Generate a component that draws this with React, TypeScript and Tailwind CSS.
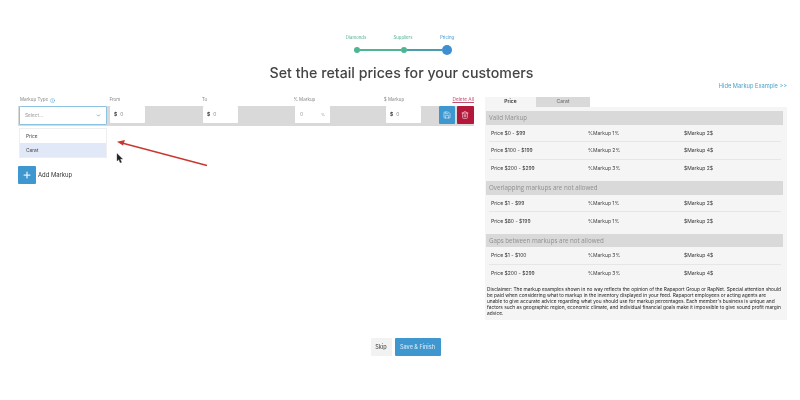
import React from "react";
import { Save, Trash2, Plus, ChevronDown, Info } from "lucide-react";

function Money({ className = "" }: { className?: string }) {
  return (
    <div className={`w-[35px] h-[17px] bg-white rounded-[1px] flex items-center px-[4px] text-[5px] ${className}`}>
      <span className="font-bold text-[#444]">$</span>
      <span className="ml-[3px] text-[#888]">0</span>
    </div>
  );
}

function Label({ children, className = "" }: { children: React.ReactNode; className?: string }) {
  return <div className={`text-[4.5px] leading-[6px] text-[#8a8a8a] ${className}`}>{children}</div>;
}

function Row({ a, b, c, last }: { a: string; b: string; c: string; last?: boolean }) {
  return (
    <div className={`mx-[3px] w-[292px] h-[17.5px] shrink-0 pt-[1px] flex items-center pl-[2px] text-[5px] text-[#333] ${last ? "" : "border-b border-[#e6e6e6]"}`}>
      <div className="w-[97px]">{a}</div>
      <div className="w-[96px] text-[#444]">{b}</div>
      <div>{c}</div>
    </div>
  );
}

function Head({ children }: { children: React.ReactNode }) {
  return (
    <div className="w-[297px] h-[13.5px] shrink-0 bg-[#d9d9d9] flex items-center pl-[3px] text-[6.2px] text-[#8f8f8f]" style={{ fontFamily: "'Open Sans', sans-serif" }}>
      {children}
    </div>
  );
}

export default function App() {
  return (
    <div className="relative w-[800px] h-[400px] bg-white overflow-hidden blur-[0.35px]" style={{ fontFamily: "Inter, 'Open Sans', sans-serif" }}>
      {/* Stepper */}
      <div className="pt-[35px] flex flex-col items-center">
        <div className="w-[131px] ml-[3px] flex text-[4.3px] leading-[5px]">
          <span className="w-[40px] text-center text-[#52b296]">Diamonds</span>
          <span className="ml-[7px] w-[40px] text-center text-[#52b296]">Suppliers</span>
          <span className="ml-[4px] w-[40px] text-center text-[#3f94cc]">Pricing</span>
        </div>
        <div className="mt-[5px] ml-[5px] w-[98px] h-[10px] flex items-center">
          <span className="w-[6px] h-[6px] rounded-full bg-[#4db592] shrink-0" />
          <span className="w-[41px] h-[1.5px] bg-[#4db592]" />
          <span className="w-[6px] h-[6px] rounded-full bg-[#4db592] shrink-0" />
          <span className="w-[35px] h-[1.5px] bg-[#4a9dab]" />
          <span className="w-[10px] h-[10px] rounded-full bg-[#3d8fd1] shrink-0" />
        </div>
        <h1 className="mt-[9px] ml-[3px] text-[14.2px] leading-[18px] font-medium text-[#444]">
          Set the retail prices for your customers
        </h1>
      </div>

      {/* Main columns */}
      <div className="flex pl-[18px] pr-[13px]">
        <div className="w-[456px] pt-[14px]">
          <div className="relative flex h-[8px] items-center">
            <Label className="ml-[2px] w-[90px] flex items-center gap-[2px]">
              Markup Type <Info size={5} className="text-[#4a9fd0]" />
            </Label>
            <Label className="w-[93px]">From</Label>
            <Label className="w-[92px]">To</Label>
            <Label className="w-[91px]">% Markup</Label>
            <Label className="w-[69px]">$ Markup</Label>
            <span className="text-[4.8px] text-[#c0506f] underline whitespace-nowrap">Delete All</span>
          </div>
          <div className="mt-[2px] h-[20px] w-[456px] bg-[#d9d9d9] flex">
            <div className="ml-[1px] w-[88px] h-[19px] bg-white border-[1.5px] border-[#8cc3e0] rounded-[1px] flex items-center justify-between px-[5px] text-[4.8px] text-[#999]">
              <span>Select...</span>
              <ChevronDown size={5} strokeWidth={3} className="text-[#4a7fa5]" />
            </div>
            <Money className="ml-[3px]" />
            <Money className="ml-[58px]" />
            <div className="ml-[57px] w-[35px] h-[17px] bg-white flex items-center justify-between px-[5px] text-[5px] text-[#999]">
              <span>0</span>
              <span className="text-[4px]">%</span>
            </div>
            <Money className="ml-[56px]" />
            <div className="ml-[18px] w-[15.5px] h-[18px] bg-[#3f97cf] rounded-[1px] flex items-center justify-center">
              <Save size={8} className="text-[#d6ebf7]" />
            </div>
            <div className="ml-[2.5px] w-[16.5px] h-[18px] bg-[#b3173a] rounded-[1px] flex items-center justify-center">
              <Trash2 size={8} className="text-[#f3d6dc]" />
            </div>
          </div>
          <div className="mt-[2px] ml-[1px] w-[88px] h-[30px] bg-white border border-[#eeeeee] text-[4.8px] text-[#444] flex flex-col">
            <div className="h-[15px] flex items-center pl-[6px]">Price</div>
            <div className="h-[14px] flex items-center pl-[6px] bg-[#e1e9f9]">Carat</div>
          </div>
          <div className="mt-[8px] flex items-center">
            <div className="w-[18px] h-[18px] bg-[#3f97cf] rounded-[1px] flex items-center justify-center">
              <Plus size={10} strokeWidth={3} className="text-[#e4f2fa]" />
            </div>
            <span className="ml-[2px] text-[5.9px] text-[#333]">Add Markup</span>
          </div>
        </div>

        <div className="ml-[11px] w-[302px] -mt-[1px]">
          <div className="h-[10px] flex items-center justify-end text-[5.7px] text-[#4a9fc4]">Hide Markup Example &gt;&gt;</div>
          <div className="mt-[6px] flex h-[10px] text-[5px]">
            <div className="w-[51px] bg-[#f5f5f5] flex items-center justify-center text-[#333] font-semibold">Price</div>
            <div className="w-[54px] bg-[#d9d9d9] flex items-center justify-center text-[#666]">Carat</div>
          </div>
          <div className="h-[213px] bg-[#f5f5f5] pt-[4px] pl-[1px] flex flex-col">
            <Head>Valid Markup</Head>
            <Row a="Price $0 - $99" b="%Markup 1%" c="$Markup 2$" />
            <Row a="Price $100 - $199" b="%Markup 2%" c="$Markup 4$" />
            <Row a="Price $200 - $299" b="%Markup 3%" c="$Markup 2$" last />
            <div className="mt-[4px]"><Head>Overlapping markups are not allowed</Head></div>
            <Row a="Price $1 - $99" b="%Markup 1%" c="$Markup 2$" />
            <Row a="Price $80 - $199" b="%Markup 1%" c="$Markup 2$" last />
            <div className="mt-[4px]"><Head>Gaps between markups are not allowed</Head></div>
            <Row a="Price $1 - $100" b="%Markup 3%" c="$Markup 4$" />
            <Row a="Price $200 - $299" b="%Markup 3%" c="$Markup 4$" last />
            <p className="mt-[4px] ml-[1px] text-[4.8px] leading-[6px] text-[#222] whitespace-nowrap">
              Disclaimer: The markup examples shown in no way reflects the opinion of the Rapaport Group or RapNet. Special attention should<br />
              be paid when considering what to markup in the inventory displayed in your feed. Rapaport employees or acting agents are<br />
              unable to give accurate advice regarding what you should use for markup percentages. Each member's business is unique and<br />
              factors such as geographic region, economic climate, and individual financial goals make it impossible to give sound profit margin<br />
              advice.
            </p>
          </div>
        </div>
      </div>

      {/* Footer buttons */}
      <div className="mt-[18px] ml-[11px] flex justify-center gap-[3px]">
        <button className="w-[21px] h-[18px] bg-[#f2f2f2] rounded-[1px] text-[5.5px] font-medium text-[#555]">Skip</button>
        <button className="w-[46px] h-[18px] bg-[#3f97cf] rounded-[1px] text-[5.5px] font-medium text-[#cfe6f5]">Save &amp; Finish</button>
      </div>

      {/* Annotation arrow */}
      <svg className="absolute left-[110px] top-[135px]" width="105" height="40" viewBox="0 0 105 40">
        <path d="M97 30.5 L12 8" stroke="#c8372f" strokeWidth="1.3" fill="none" />
        <path d="M7 6.8 L15 5 L13 10.5 Z" fill="#c8372f" />
      </svg>
      {/* Mouse cursor */}
      <svg className="absolute left-[116px] top-[153px]" width="8" height="11" viewBox="0 0 8 11">
        <path d="M1 0.5 V8 L2.8 6.5 L4.2 9.8 L5.6 9.2 L4.2 6 H6.6 Z" fill="#222" stroke="#555" strokeWidth="0.4" />
      </svg>
    </div>
  );
}
